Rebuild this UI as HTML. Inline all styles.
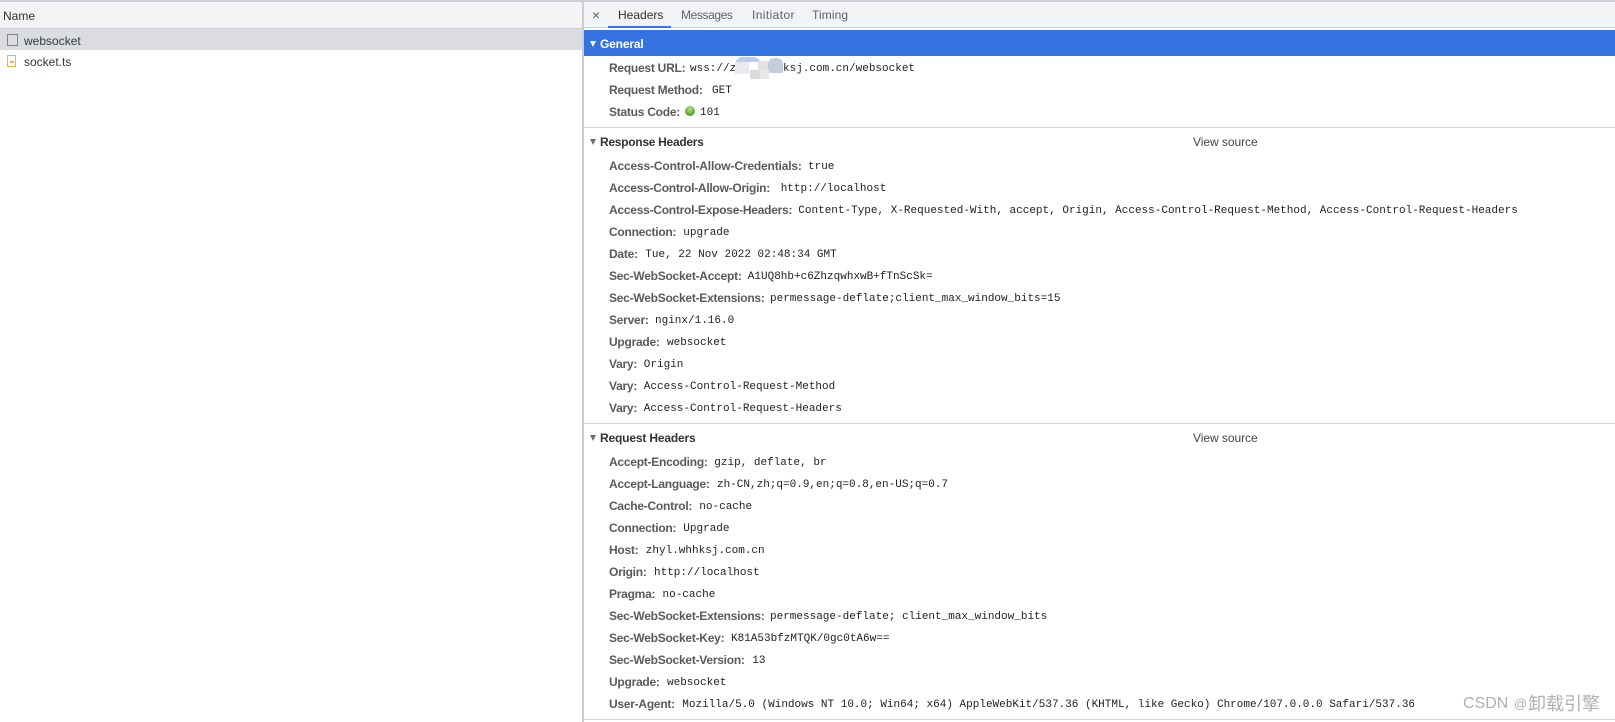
<!DOCTYPE html>
<html><head><meta charset="utf-8"><style>
html,body{margin:0;padding:0;background:#fff}
#p{position:relative;width:1615px;height:722px;overflow:hidden;background:#fff;font-family:"Liberation Sans",sans-serif;font-size:12px;color:#303942}
#p div{position:absolute}
.r{height:16px;line-height:16px;white-space:nowrap}
.k{left:609px;color:#5a5a5a;font-weight:bold;letter-spacing:-.25px;font-size:12px;margin-top:-.5px}
.v{color:#222;font-family:"Liberation Mono",monospace;font-size:11px;margin-top:1px}
.h{left:600px;color:#333;font-weight:bold;font-size:12px;letter-spacing:-.17px}
.l{left:584px;right:0;height:1px;background:#cfd1d4}
.t{top:7px;height:16px;line-height:16px;color:#5f6368;font-size:12px}
.a{width:0;height:0;border-left:3.5px solid transparent;border-right:3.5px solid transparent;border-top:6px solid #6e6e6e;left:590px}
.vs{left:1193px;color:#444;font-size:12px;letter-spacing:-.05px}
</style></head><body><div id="p">
<div style="left:0;top:0;width:1615px;height:2px;background:#ccced3"></div>
<div style="left:0;top:2px;width:582px;height:26px;background:#f1f3f4"></div>
<div style="left:0;top:28px;width:582px;height:1px;background:#cbcdd1"></div>
<div style="left:0;top:29px;width:582px;height:21px;background:#dadce0"></div>
<div class="r" style="left:3px;top:8px;color:#333">Name</div>
<div style="left:7px;top:34px;width:9px;height:10px;border:1px solid #7f8185"></div>
<div class="r" style="left:24px;top:33px;color:#303942">websocket</div>
<div style="left:7px;top:55px;width:7px;height:10px;border:1px solid #e9b440;background:#fff"></div>
<div style="left:10px;top:61px;width:4px;height:2px;background:#e9b440"></div>
<div class="r" style="left:24px;top:54px;color:#303942">socket.ts</div>

<div style="left:582px;top:2px;width:2px;height:720px;background:#cbcdd1"></div>
<div style="left:584px;top:2px;right:0;height:25px;background:#f1f3f4"></div>
<div style="left:584px;top:27px;right:0;height:1px;background:#cfd1d4"></div>
<div class="t" style="left:592px;color:#5f6368;font-size:14px">×</div>
<div class="t" style="left:618px;color:#333">Headers</div>
<div class="t" style="left:681px;letter-spacing:-.4px">Messages</div>
<div class="t" style="left:752px;letter-spacing:.4px">Initiator</div>
<div class="t" style="left:812px;letter-spacing:.1px">Timing</div>
<div style="left:608px;top:26px;width:63px;height:2px;background:#3b78e7"></div>

<div style="left:584px;top:30px;right:0;height:26px;background:#3372e0"></div>
<div class="a" style="top:41px;border-top-color:#fff"></div>
<div class="r h" style="top:36px;color:#fff">General</div>
<div class="r k" style="top:60px">Request URL:</div><div class="r v" style="left:690px;top:60px">wss://z</div><div class="r v" style="left:783px;top:60px">ksj.com.cn/websocket</div>
<div style="left:735px;top:57px;width:26px;height:8px;background:#b8cff2;border-radius:8px 8px 0 0"></div>
<div style="left:768px;top:58px;width:15px;height:15px;background:#c4cddb;border-radius:6px 6px 0 0"></div>
<div style="left:735px;top:62px;width:14px;height:12px;background:#e9e9ee"></div>
<div style="left:749px;top:62px;width:9px;height:9px;background:#fff"></div>
<div style="left:758px;top:61px;width:10px;height:10px;background:#e6e2df"></div>
<div style="left:750px;top:70px;width:10px;height:9px;background:#dadbde"></div>
<div style="left:760px;top:70px;width:9px;height:9px;background:#e8e8ea"></div>
<div class="r k" style="top:82px">Request Method:</div><div class="r v" style="left:712px;top:82px">GET</div>
<div class="r k" style="top:104px">Status Code:</div>
<div style="left:685px;top:106px;width:10px;height:10px;border-radius:50%;background:radial-gradient(circle at 50% 30%,#b5e58a,#5aa62f 65%,#3f8a20)"></div>
<div class="r v" style="left:700px;top:104px">101</div>
<div class="l" style="top:127px"></div>

<div class="a" style="top:139px"></div>
<div class="r h" style="top:134px;letter-spacing:-.28px">Response Headers</div>
<div class="r vs" style="top:134px">View source</div>
<div class="r k" style="top:158px;letter-spacing:-.16px">Access-Control-Allow-Credentials:</div><div class="r v" style="left:808px;top:158px">true</div>
<div class="r k" style="top:180px">Access-Control-Allow-Origin:</div><div class="r v" style="left:780.7px;top:180px">http://localhost</div>
<div class="r k" style="top:202px">Access-Control-Expose-Headers:</div><div class="r v" style="left:798.3px;top:202px">Content-Type, X-Requested-With, accept, Origin, Access-Control-Request-Method, Access-Control-Request-Headers</div>
<div class="r k" style="top:224px">Connection:</div><div class="r v" style="left:683.3px;top:224px">upgrade</div>
<div class="r k" style="top:246px">Date:</div><div class="r v" style="left:645.3px;top:246px">Tue, 22 Nov 2022 02:48:34 GMT</div>
<div class="r k" style="top:268px">Sec-WebSocket-Accept:</div><div class="r v" style="left:747.8px;top:268px">A1UQ8hb+c6ZhzqwhxwB+fTnScSk=</div>
<div class="r k" style="top:290px">Sec-WebSocket-Extensions:</div><div class="r v" style="left:770px;top:290px">permessage-deflate;client_max_window_bits=15</div>
<div class="r k" style="top:312px">Server:</div><div class="r v" style="left:655px;top:312px">nginx/1.16.0</div>
<div class="r k" style="top:334px">Upgrade:</div><div class="r v" style="left:667px;top:334px">websocket</div>
<div class="r k" style="top:356px">Vary:</div><div class="r v" style="left:643.8px;top:356px">Origin</div>
<div class="r k" style="top:378px">Vary:</div><div class="r v" style="left:643.8px;top:378px">Access-Control-Request-Method</div>
<div class="r k" style="top:400px">Vary:</div><div class="r v" style="left:643.8px;top:400px">Access-Control-Request-Headers</div>
<div class="l" style="top:423px"></div>

<div class="a" style="top:435px"></div>
<div class="r h" style="top:430px">Request Headers</div>
<div class="r vs" style="top:430px">View source</div>
<div class="r k" style="top:454.5px">Accept-Encoding:</div><div class="r v" style="left:714.3px;top:454px">gzip, deflate, br</div>
<div class="r k" style="top:476px">Accept-Language:</div><div class="r v" style="left:717px;top:476px">zh-CN,zh;q=0.9,en;q=0.8,en-US;q=0.7</div>
<div class="r k" style="top:498px">Cache-Control:</div><div class="r v" style="left:699.3px;top:498px">no-cache</div>
<div class="r k" style="top:520px">Connection:</div><div class="r v" style="left:683.3px;top:520px">Upgrade</div>
<div class="r k" style="top:542px">Host:</div><div class="r v" style="left:645.8px;top:542px">zhyl.whhksj.com.cn</div>
<div class="r k" style="top:564px">Origin:</div><div class="r v" style="left:654px;top:564px">http://localhost</div>
<div class="r k" style="top:586px">Pragma:</div><div class="r v" style="left:662.5px;top:586px">no-cache</div>
<div class="r k" style="top:608px">Sec-WebSocket-Extensions:</div><div class="r v" style="left:770px;top:608px">permessage-deflate; client_max_window_bits</div>
<div class="r k" style="top:630px">Sec-WebSocket-Key:</div><div class="r v" style="left:731px;top:630px">K81A53bfzMTQK/0gc0tA6w==</div>
<div class="r k" style="top:652px">Sec-WebSocket-Version:</div><div class="r v" style="left:752.3px;top:652px">13</div>
<div class="r k" style="top:674px">Upgrade:</div><div class="r v" style="left:667px;top:674px">websocket</div>
<div class="r k" style="top:696px">User-Agent:</div><div class="r v" style="left:682.3px;top:696px">Mozilla/5.0 (Windows NT 10.0; Win64; x64) AppleWebKit/537.36 (KHTML, like Gecko) Chrome/107.0.0.0 Safari/537.36</div>
<div class="l" style="top:719px"></div>

<div style="left:1463px;top:692px;height:24px;line-height:24px;font-size:16px;color:#b0b0b0;white-space:nowrap">CSDN</div>
<div style="left:1514px;top:692px;height:24px;line-height:24px;font-size:13px;color:#b0b0b0;white-space:nowrap">@</div>
<div style="left:1528px;top:692px;height:24px;line-height:24px;font-size:18px;color:#b0b0b0;white-space:nowrap;font-family:'Liberation Sans','Noto Sans CJK SC',sans-serif">卸载引擎</div>
</div></body></html>
